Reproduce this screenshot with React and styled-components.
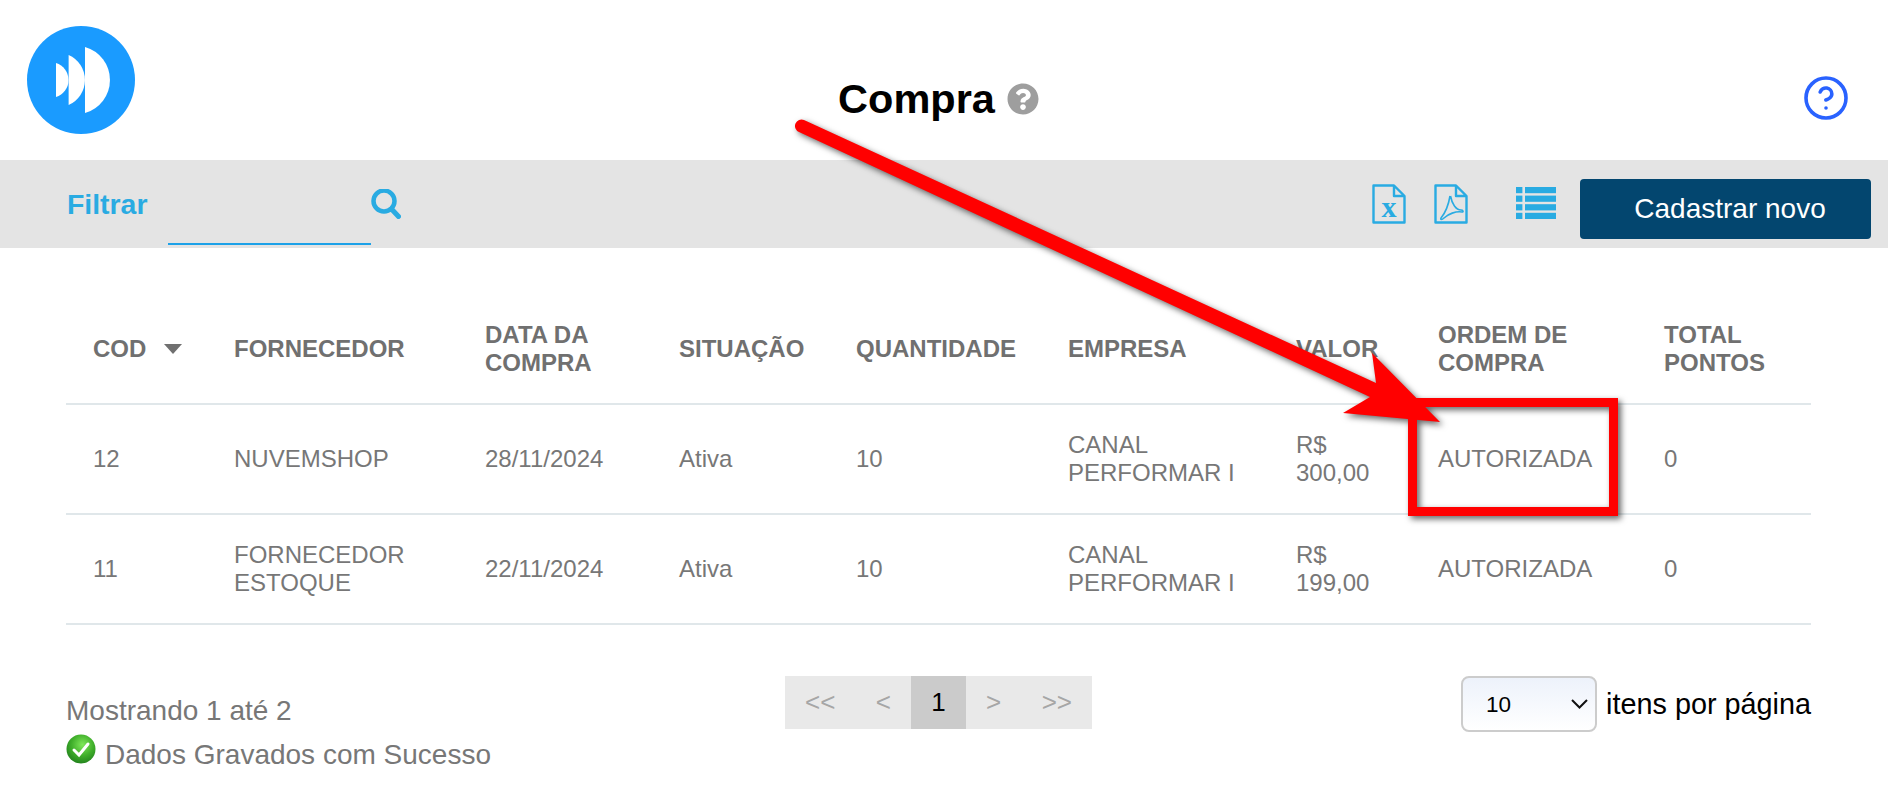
import React from 'react'
import styled, { createGlobalStyle } from 'styled-components'
import { FaQuestionCircle } from 'react-icons/fa'
import { CircleHelp } from 'lucide-react'

const rows = [
  {
    cod: '12',
    supplier: 'NUVEMSHOP',
    date: '28/11/2024',
    status: 'Ativa',
    amount: '10',
    company: 'CANAL PERFORMAR I',
    value: 'R$ 300,00',
    order: 'AUTORIZADA',
    points: '0',
  },
  {
    cod: '11',
    supplier: 'FORNECEDOR ESTOQUE',
    date: '22/11/2024',
    status: 'Ativa',
    amount: '10',
    company: 'CANAL PERFORMAR I',
    value: 'R$ 199,00',
    order: 'AUTORIZADA',
    points: '0',
  },
]

const columns = [
  { label: 'COD', width: 141, sorted: true },
  { label: 'FORNECEDOR', width: 251 },
  { label: 'DATA DA COMPRA', width: 194 },
  { label: 'SITUAÇÃO', width: 177 },
  { label: 'QUANTIDADE', width: 212 },
  { label: 'EMPRESA', width: 228 },
  { label: 'VALOR', width: 142 },
  { label: 'ORDEM DE COMPRA', width: 226 },
  { label: 'TOTAL PONTOS', width: 174 },
]

const Logo = () => (
  <LogoSvg viewBox="0 0 108 108">
    <circle cx="54" cy="54" r="54" fill="#1a9bff" />
    <path d="M29 37 A17.8 17.8 0 0 1 29 71 Z" fill="#fff" />
    <path d="M41.6 29 A27.3 27.3 0 0 1 41.6 79 Z" fill="#fff" />
    <path d="M58 21 A34.3 34.3 0 0 1 58 87 Z" fill="#fff" />
  </LogoSvg>
)

const SearchIcon = () => (
  <SearchSvg viewBox="0 0 30 30">
    <circle cx="13" cy="12" r="10.5" fill="none" stroke="#29abe2" strokeWidth="4.5" />
    <path
      d="M20.5 20L27.5 27.5"
      stroke="#29abe2"
      strokeWidth="5"
      strokeLinecap="round"
    />
  </SearchSvg>
)

const XlsIcon = () => (
  <FileSvg viewBox="0 0 34 40">
    <path
      d="M1.5 1.5H22L32.5 12V38.5H1.5Z M22 1.5V12H32.5"
      fill="none"
      stroke="#29abe2"
      strokeWidth="2.4"
      strokeLinejoin="round"
    />
    <IconLetter x="17" y="33" textAnchor="middle">
      x
    </IconLetter>
  </FileSvg>
)

const PdfIcon = () => (
  <FileSvg viewBox="0 0 34 40">
    <path
      d="M1.5 1.5H22L32.5 12V38.5H1.5Z M22 1.5V12H32.5"
      fill="none"
      stroke="#29abe2"
      strokeWidth="2.4"
      strokeLinejoin="round"
    />
    <path
      d="M16 12C15 18 12 28 7 34C6 36 8 36 10 34C14 30 22 27 28 28C30 28 29 26 27 26C22 26 18 20 16.5 12"
      fill="none"
      stroke="#29abe2"
      strokeWidth="1.6"
    />
  </FileSvg>
)

const ListIcon = () => (
  <ListSvg viewBox="0 0 40 32">
    {[0, 8.6, 17.2, 25.8].map(y => (
      <g key={y} fill="#29abe2">
        <rect x="0" y={y} width="6.4" height="6.2" />
        <rect x="9" y={y} width="31" height="6.2" />
      </g>
    ))}
  </ListSvg>
)

const SuccessIcon = () => (
  <CheckSvg viewBox="0 0 30 30">
    <defs>
      <radialGradient id="ball" cx="55%" cy="35%" r="70%">
        <stop offset="0%" stopColor="#7fe85a" />
        <stop offset="55%" stopColor="#3fae2a" />
        <stop offset="100%" stopColor="#1f7d1c" />
      </radialGradient>
    </defs>
    <circle cx="15" cy="15" r="14.5" fill="url(#ball)" />
    <path
      d="M8 16L13 21L22 10"
      fill="none"
      stroke="#fff"
      strokeWidth="3"
      strokeLinecap="round"
    />
  </CheckSvg>
)

const App = () => (
  <Page>
    <GlobalStyle />
    <Header>
      <Logo />
      <TitleBox>
        <Title>Compra</Title>
        <FaQuestionCircle size={32} color="#9e9e9e" />
      </TitleBox>
      <HelpBox>
        <CircleHelp size={48} color="#2962ff" strokeWidth={1.8} />
      </HelpBox>
    </Header>

    <Toolbar>
      <FilterGroup>
        <FilterLabel>Filtrar</FilterLabel>
        <FilterInput />
        <SearchIcon />
      </FilterGroup>
      <Actions>
        <XlsIcon />
        <PdfSlot>
          <PdfIcon />
        </PdfSlot>
        <ListSlot>
          <ListIcon />
        </ListSlot>
        <NewButton>Cadastrar novo</NewButton>
      </Actions>
    </Toolbar>

    <Content>
      <Table>
        <colgroup>
          {columns.map(c => (
            <col key={c.label} style={{ width: c.width }} />
          ))}
        </colgroup>
        <thead>
          <tr>
            {columns.map(c => (
              <Th key={c.label}>
                {c.label}
                {c.sorted && <SortArrow />}
              </Th>
            ))}
          </tr>
        </thead>
        <tbody>
          {rows.map(r => (
            <tr key={r.cod}>
              <Td>{r.cod}</Td>
              <Td>{r.supplier}</Td>
              <Td>{r.date}</Td>
              <Td>{r.status}</Td>
              <Td>{r.amount}</Td>
              <Td>{r.company}</Td>
              <Td>{r.value}</Td>
              <Td>{r.order}</Td>
              <Td>{r.points}</Td>
            </tr>
          ))}
        </tbody>
      </Table>

      <Footer>
        <Summary>
          <SummaryLine>Mostrando 1 até 2</SummaryLine>
          <SuccessLine>
            <SuccessIcon />
            Dados Gravados com Sucesso
          </SuccessLine>
        </Summary>
        <Pagination>
          <PageItem>&lt;&lt;</PageItem>
          <PageItem>&lt;</PageItem>
          <PageItem $active>1</PageItem>
          <PageItem>&gt;</PageItem>
          <PageItem>&gt;&gt;</PageItem>
        </Pagination>
        <PerPage>
          <SelectWrap>
            <PerPageSelect defaultValue="10">
              <option value="10">10</option>
              <option value="25">25</option>
              <option value="50">50</option>
            </PerPageSelect>
            <SelectArrow viewBox="0 0 17 10">
              <path
                d="M1 1L8.5 8.5L16 1"
                fill="none"
                stroke="#111"
                strokeWidth="2"
              />
            </SelectArrow>
          </SelectWrap>
          itens por página
        </PerPage>
      </Footer>
    </Content>

    {/* callout drawn over the screenshot */}
    <Callout viewBox="0 0 1888 787">
      <rect
        x="1412.5"
        y="402.5"
        width="201"
        height="109"
        fill="none"
        stroke="#ff0000"
        strokeWidth="9"
      />
      <path
        d="M804 120L1376 383L1372 353L1440 422L1343 413L1370 397L799 132A6.5 6.5 0 0 1 804 120Z"
        fill="#ff0000"
      />
    </Callout>
  </Page>
)

export default App

// #region styled-components
const GlobalStyle = createGlobalStyle`
  body {
    margin: 0;
    background: #fff;
    font-family: "Liberation Sans", Arial, sans-serif;
  }
`

const Page = styled.div`
  position: relative;
  width: 1888px;
  height: 787px;
  overflow: hidden;
`

const Header = styled.header`
  display: grid;
  grid-template-columns: 1fr auto 1fr;
  height: 160px;
  padding: 0 38px 0 27px;
  box-sizing: border-box;
`

const LogoSvg = styled.svg`
  width: 108px;
  height: 108px;
  margin-top: 26px;
`

const TitleBox = styled.div`
  display: flex;
  align-items: center;
  gap: 12px;
  height: 64px;
  margin-top: 67px;
`

const Title = styled.h1`
  margin: 0;
  font-size: 41.5px;
  font-weight: 700;
  color: #000;
`

const HelpBox = styled.div`
  display: flex;
  justify-content: flex-end;
  margin-top: 74px;
`

const Toolbar = styled.div`
  display: flex;
  align-items: center;
  justify-content: space-between;
  height: 88px;
  padding: 0 17px 0 67px;
  background: #e4e4e4;
`

const FilterGroup = styled.div`
  display: flex;
  align-items: center;
`

const FilterLabel = styled.span`
  width: 101px;
  font-size: 28.4px;
  font-weight: 700;
  color: #29abe2;
`

const FilterInput = styled.input`
  width: 203px;
  height: 40px;
  margin-top: 42px;
  border: 0;
  border-bottom: 2px solid #1da1e8;
  background: transparent;
  outline: none;
  box-sizing: border-box;
`

const SearchSvg = styled.svg`
  width: 30px;
  height: 30px;
`

const Actions = styled.div`
  display: flex;
  align-items: center;
`

const FileSvg = styled.svg`
  width: 34px;
  height: 40px;
`

const IconLetter = styled.text`
  font-family: "Liberation Serif", serif;
  font-size: 30px;
  font-weight: 700;
  fill: #29abe2;
`

const PdfSlot = styled.div`
  display: flex;
  margin-left: 28px;
`

const ListSlot = styled.div`
  display: flex;
  margin: 0 24px 0 48px;
`

const ListSvg = styled.svg`
  width: 40px;
  height: 32px;
  margin-top: -3px;
`

const NewButton = styled.button`
  width: 291px;
  height: 60px;
  margin-top: 10px;
  padding-left: 15px;
  border: 0;
  border-radius: 4px;
  background: #03466f;
  color: #fff;
  font-family: inherit;
  font-size: 28px;
`

const Content = styled.main`
  padding: 46px 77px 0 66px;
`

const Table = styled.table`
  width: 1745px;
  table-layout: fixed;
  border-collapse: collapse;
`

const Th = styled.th`
  height: 110px;
  padding: 0 10px 0 27px;
  border-bottom: 2px solid #e0e7ea;
  box-sizing: border-box;
  font-size: 24px;
  line-height: 28px;
  font-weight: 700;
  text-align: left;
  color: #707070;
`

const SortArrow = styled.span`
  display: inline-block;
  margin: 0 0 3px 18px;
  border-style: solid;
  border-width: 10px 9px 0;
  border-color: #707070 transparent transparent;
  vertical-align: middle;
`

const Td = styled.td`
  height: 110px;
  padding: 0 10px 0 27px;
  border-bottom: 2px solid #e0e7ea;
  box-sizing: border-box;
  font-size: 24px;
  line-height: 28px;
  color: #777;
`

const Footer = styled.div`
  display: grid;
  grid-template-columns: 1fr auto 1fr;
  align-items: start;
  margin-top: 51px;
`

const Summary = styled.div`
  padding-top: 19px;
  font-size: 28px;
  color: #777;
`

const SummaryLine = styled.div`
  line-height: 32px;
`

const SuccessLine = styled.div`
  display: flex;
  align-items: flex-start;
  gap: 9px;
  margin-top: 7px;
  line-height: 42px;
`

const CheckSvg = styled.svg`
  width: 30px;
  height: 30px;
  flex: none;
`

const Pagination = styled.div`
  display: flex;
  background: #e9e9e9;
`

const PageItem = styled.span`
  height: 53px;
  padding: 0 20.2px;
  font-size: 26px;
  line-height: 53px;
  color: ${({ $active }) => ($active ? '#000' : '#a6a6a6')};
  background: ${({ $active }) => ($active ? '#cbcbcb' : 'transparent')};
`

const PerPage = styled.div`
  display: flex;
  align-items: center;
  justify-content: flex-end;
  gap: 9px;
  font-size: 28.8px;
  color: #000;
`

const SelectWrap = styled.div`
  position: relative;
  display: flex;
`

const PerPageSelect = styled.select`
  width: 136px;
  height: 56px;
  padding-left: 23px;
  border: 2px solid #ccc;
  border-radius: 8px;
  background: linear-gradient(#edf2fb, #fff);
  appearance: none;
  font-family: inherit;
  font-size: 22.5px;
  color: #000;
  box-sizing: border-box;
`

const SelectArrow = styled.svg`
  position: absolute;
  top: 23px;
  right: 9px;
  width: 17px;
  height: 10px;
  pointer-events: none;
`

const Callout = styled.svg`
  position: absolute;
  top: 0;
  left: 0;
  width: 1888px;
  height: 787px;
  pointer-events: none;
  filter: drop-shadow(3px 3px 3px rgba(0, 0, 0, 0.6));
`
// #endregion
